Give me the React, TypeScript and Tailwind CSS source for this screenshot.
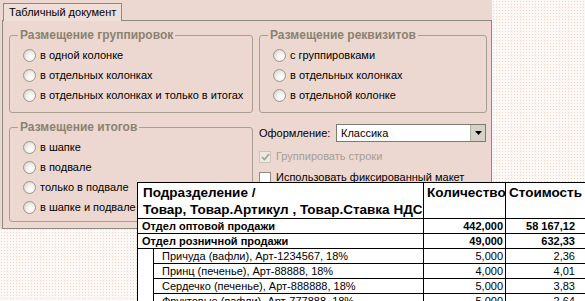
import React from "react";

const font = "font-['Liberation_Sans',Arial,sans-serif]";

function Radio({ label }: { label: string }) {
    return (
        <div className="flex items-center h-[20px] gap-[4px]">
            <span className="w-[13px] h-[13px] rounded-full border border-[#9b968c] bg-[radial-gradient(circle_at_65%_65%,#ffffff_0%,#f1efea_45%,#cfcac0_100%)]" />
            <span className="text-[11px] text-black leading-none">{label}</span>
        </div>
    );
}

function Group({ title, items, className }: { title: string; items: string[]; className?: string }) {
    return (
        <fieldset className={"border border-[#a7a08f] rounded-[3px] " + (className ?? "")}>
            <legend className="ml-[8px] px-[2px] text-[12px] font-bold leading-[14px] text-[#8a8270]">{title}</legend>
            <div className="flex flex-col pl-[13px] pt-[3px]">
                {items.map((t) => (
                    <Radio key={t} label={t} />
                ))}
            </div>
        </fieldset>
    );
}

const rows = [
    { name: "Отдел оптовой продажи", qty: "442,000", sum: "58 167,12", bold: true },
    { name: "Отдел розничной продажи", qty: "49,000", sum: "632,33", bold: true },
    { name: "Причуда (вафли), Арт-1234567, 18%", qty: "5,000", sum: "2,36" },
    { name: "Принц (печенье), Арт-88888, 18%", qty: "4,000", sum: "4,01" },
    { name: "Сердечко (печенье), Арт-888888, 18%", qty: "5,000", sum: "3,83" },
    { name: "Фруктовые (вафли), Арт-777888, 18%", qty: "5,000", sum: "2,64" },
];

export default function App() {
    return (
        <div className={"relative w-[585px] h-[301px] overflow-hidden bg-[#fbf8f5] bg-[radial-gradient(#ecd2c9_0.8px,transparent_0.9px)] bg-[length:3px_3px] " + font}>
            {/* dialog */}
            <div className="w-[492px] h-[229px] flex flex-col bg-[#edd8d1]">
                <div className="h-[20px] flex items-end pl-[3px]">
                    <div className="h-[18px] w-[119px] border-t border-l border-r border-[#8f897c] bg-[#efdfd9] flex items-center pl-[5px] text-[11px] text-black -mb-px relative z-10">
                        Табличный документ
                    </div>
                </div>
                <div className="ml-[2px] w-[490px] flex-1 border border-[#8f897c] px-[6px] pt-[7px]">
                    <div className="grid grid-cols-[244px_228px] gap-x-[6px] gap-y-[7px]">
                        <Group
                            title="Размещение группировок"
                            items={["в одной колонке", "в отдельных колонках", "в отдельных колонках и только в итогах"]}
                            className="h-[85px]"
                        />
                        <Group
                            title="Размещение реквизитов"
                            items={["с группировками", "в отдельных колонках", "в отдельной колонке"]}
                            className="h-[85px]"
                        />
                        <Group
                            title="Размещение итогов"
                            items={["в шапке", "в подвале", "только в подвале", "в шапке и подвале"]}
                            className="h-[102px]"
                        />
                        <div className="flex flex-col pt-[4px]">
                            <div className="flex items-center h-[18px]">
                                <span className="text-[11px] w-[77px]">Оформление:</span>
                                <div className="w-[150px] h-[18px] border border-[#7e7a72] bg-white flex items-center">
                                    <span className="flex-1 pl-[4px] text-[11px]">Классика</span>
                                    <span className="w-[15px] h-[16px] bg-[#d6d2ca] border-l border-[#b5b0a6] flex items-center justify-center">
                                        <svg width="7" height="4" viewBox="0 0 7 4">
                                            <path d="M0 0h7L3.5 4z" fill="#000" />
                                        </svg>
                                    </span>
                                </div>
                            </div>
                            <div className="flex items-center h-[21px] mt-[4px] gap-[5px]">
                                <span className="w-[12px] h-[12px] border border-[#c9c4ba] bg-[#ece8e2] flex items-center justify-center">
                                    <svg width="9" height="8" viewBox="0 0 9 8">
                                        <path d="M1 4l2.5 2.5L8 1" stroke="#a39e95" strokeWidth="1.6" fill="none" />
                                    </svg>
                                </span>
                                <span className="text-[11px] text-[#a39d93]">Группировать строки</span>
                            </div>
                            <div className="flex items-center h-[21px] gap-[5px]">
                                <span className="w-[12px] h-[12px] border border-[#8f8a80] bg-white" />
                                <span className="text-[11px] text-black">Использовать фиксированный макет</span>
                            </div>
                        </div>
                    </div>
                </div>
            </div>

            {/* spreadsheet fragment overlaid */}
            <div className="absolute left-[137px] top-[182px] w-[470px] bg-white bg-[radial-gradient(#c9c9c9_0.6px,transparent_0.7px)] bg-[length:4px_4px] border-t border-l border-black text-black">
                <div className="grid grid-cols-[286px_82px_100px] h-[36px] border-b border-black">
                    <div className="border-r border-black pl-[5px] pt-[1px] text-[13.5px] font-bold leading-[17px] whitespace-nowrap">
                        Подразделение /
                        <br />
                        Товар, Товар.Артикул , Товар.Ставка НДС
                    </div>
                    <div className="border-r border-black pl-[3px] pt-[1px] text-[13.5px] font-bold leading-[17px] whitespace-nowrap">Количество</div>
                    <div className="pl-[3px] pt-[1px] text-[13.5px] font-bold leading-[17px] whitespace-nowrap">Стоимость</div>
                </div>
                {rows.map((r) => (
                    <div key={r.name} className="grid grid-cols-[286px_82px_100px] h-[15px]">
                        {r.bold ? (
                            <div className="border-r border-b border-black pl-[4px] text-[11px] font-bold leading-[14px]">{r.name}</div>
                        ) : (
                            <div className="flex">
                                <div className="w-[16px] border-r border-black" />
                                <div className="flex-1 border-r border-b border-black pl-[8px] text-[11px] leading-[14px]">{r.name}</div>
                            </div>
                        )}
                        <div className={"border-r border-b border-black pr-[2px] text-right text-[11px] leading-[14px] " + (r.bold ? "font-bold" : "")}>
                            {r.qty}
                        </div>
                        <div className={"border-b border-black pr-[31px] text-right text-[11px] leading-[14px] " + (r.bold ? "font-bold" : "")}>
                            {r.sum}
                        </div>
                    </div>
                ))}
            </div>
        </div>
    );
}
